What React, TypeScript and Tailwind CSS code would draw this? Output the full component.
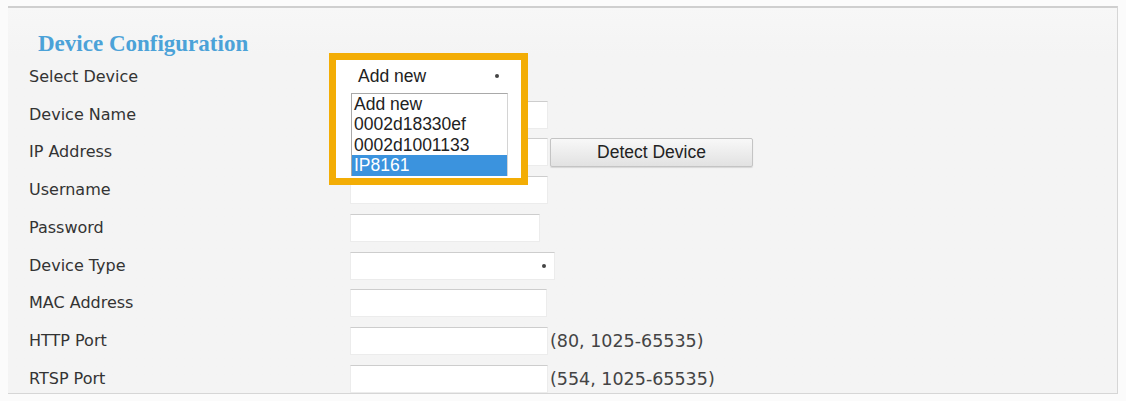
const rows = [
  { label: "Select Device", kind: "picker" },
  { label: "Device Name", kind: "input", w: "w-[198px]" },
  { label: "IP Address", kind: "input", w: "w-[198px]", button: "Detect Device" },
  { label: "Username", kind: "input", w: "w-[198px]" },
  { label: "Password", kind: "input", w: "w-[190px]" },
  { label: "Device Type", kind: "select", w: "w-[205px]" },
  { label: "MAC Address", kind: "input", w: "w-[197px]" },
  { label: "HTTP Port", kind: "input", w: "w-[198px]", hint: "(80, 1025-65535)" },
  { label: "RTSP Port", kind: "input", w: "w-[198px]", hint: "(554, 1025-65535)" },
];

const devices = ["Add new", "0002d18330ef", "0002d1001133", "IP8161"];

function Field({ w, arrow }: { w?: string; arrow?: boolean }) {
  return (
    <div
      className={`${w} h-[28px] bg-white border border-[#ececec] border-t-[#cdcdcd] flex items-center justify-end pr-[8px]`}
    >
      {arrow && <span className="w-[4px] h-[4px] rounded-full bg-[#444]" />}
    </div>
  );
}

function DevicePicker() {
  return (
    <div className="relative w-[160px] h-[28px]">
      {/* highlight frame drawn over the screenshot */}
      <div className="absolute left-[-21px] top-[-10px] w-[199px] h-[132px] border-[7px] border-[#f3ad05] bg-white z-10" />
      <div className="relative z-20 h-full flex items-center justify-between pl-[8px] pr-[11px] pb-[2px] bg-white font-['Liberation_Sans',sans-serif] text-[17.5px] text-[#222]">
        <span>Add new</span>
        <span className="w-[4px] h-[4px] rounded-full bg-[#444]" />
      </div>
      <ul className="absolute z-20 left-[1px] top-[30px] w-[157px] bg-white border border-[#a9a9a9] border-r-[#d4d4d4] border-b-0 font-['Liberation_Sans',sans-serif] text-[17.5px] leading-[20.5px] text-[#222]">
        {devices.map((d, i) => (
          <li
            key={d}
            className={i === devices.length - 1 ? "pl-[2px] bg-[#3b93de] text-white" : "pl-[2px]"}
          >
            {d}
          </li>
        ))}
      </ul>
    </div>
  );
}

export default function App() {
  return (
    <div className="w-[1126px] h-[401px] bg-[#fbfbfb] pt-[6px] px-[8px] overflow-hidden">
      <div className="h-[388px] border-t-2 border-b border-r border-[#d6d6d6] border-t-[#cfcfcf] bg-gradient-to-b from-[#f7f7f7] to-[#f4f4f4] to-[12%] pl-[21px] pt-[22px]">
        <h2 className="ml-[9px] h-[28px] font-['Liberation_Serif',serif] font-bold text-[23px] leading-[28px] text-[#4ba2d8]">
          Device Configuration
        </h2>
        <div className="flex flex-col">
          {rows.map((r) => (
            <div key={r.label} className="h-[37.75px] flex items-center">
              <div className="w-[321px] font-['DejaVu_Sans',sans-serif] text-[16px] text-[#333]">
                {r.label}
              </div>
              {r.kind === "picker" && <DevicePicker />}
              {r.kind === "input" && <Field w={r.w} />}
              {r.kind === "select" && <Field w={r.w} arrow />}
              {r.button && (
                <button className="ml-[2px] w-[203px] h-[29px] border border-[#c4c4c4] rounded-[2px] bg-gradient-to-b from-[#f8f8f8] to-[#e2e2e2] shadow-[0_1px_1px_rgba(0,0,0,0.12)] font-['Liberation_Sans',sans-serif] text-[17.5px] text-[#222]">
                  {r.button}
                </button>
              )}
              {r.hint && (
                <span className="ml-[2px] font-['DejaVu_Sans',sans-serif] text-[17.5px] text-[#444]">
                  {r.hint}
                </span>
              )}
            </div>
          ))}
        </div>
      </div>
    </div>
  );
}
